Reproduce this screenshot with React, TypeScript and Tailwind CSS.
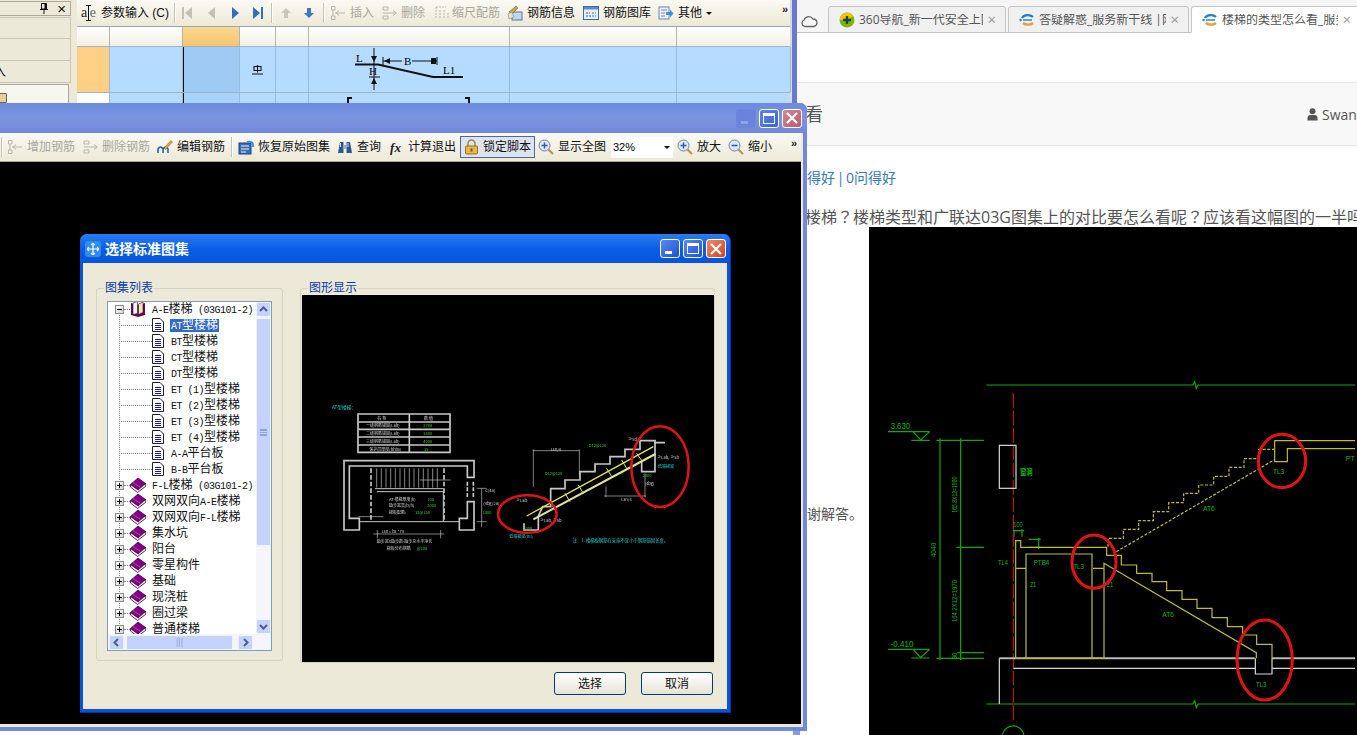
import React from 'react';

// ---------- small drawn icons ----------
const BookClosed = () => (
  <svg width="16" height="16" viewBox="0 0 16 16" className="shrink-0">
    <path d="M0.5 7.5 L8 1 L15.5 6.5 L8 13 Z" fill="#860086" stroke="#3c0040" strokeWidth="0.8" />
    <path d="M0.5 7.5 L0.5 10 L7.5 15.5 L15.5 9.5 L15.5 6.5 L8 13 Z" fill="#f6f0f6" stroke="#3c0040" strokeWidth="0.8" />
    <path d="M3 5.5 L10 10" stroke="#b040b0" strokeWidth="1" />
  </svg>
);

const BookOpen = () => (
  <svg width="16" height="16" viewBox="0 0 16 16" className="shrink-0">
    <path d="M1 2 L1 14 L8 16 L15 14 L15 2 L8 4 Z" fill="#5c1048" />
    <path d="M3 2 L7.5 0.5 L7.5 12.5 L3 13.5 Z" fill="#ffffff" stroke="#3c0040" strokeWidth="0.6" />
    <path d="M8.5 3 L13 1 L13 11.5 L8.5 13.5 Z" fill="#f6e8a8" stroke="#3c0040" strokeWidth="0.6" />
  </svg>
);

const DocIcon = () => (
  <svg width="12" height="14" viewBox="0 0 12 14" className="shrink-0">
    <path d="M0.5 0.5 H8 L11.5 4 V13.5 H0.5 Z" fill="#fff" stroke="#222" />
    <path d="M3 5.5 H9 M3 7.5 H9 M3 9.5 H9 M3 11.5 H9" stroke="#1a1a8c" />
  </svg>
);

const Nav = ({ d, color }: { d: string; color: string }) => (
  <svg width="12" height="14" viewBox="0 0 12 14" className="shrink-0">
    <path d={d} fill={color} />
  </svg>
);

const RowIcon = ({ tone }: { tone: 'insert' | 'remove' | 'scale' }) => (
  <svg width="16" height="16" viewBox="0 0 16 16" className="shrink-0" fill="none" stroke="#b9b7ac">
    {tone === 'insert' && <path d="M1.5 1.5 H5 V5 H1.5 Z M1.5 11 H5 V14.5 H1.5 Z M3 5 V11 M5 8 H15 M9 5.5 L6 8 L9 10.5" />}
    {tone === 'remove' && <path d="M1 2 H6 V5 H1 Z M1 11 H6 V14 H1 Z M1 8 H14 M11 5.5 L14.5 8 L11 10.5" />}
    {tone === 'scale' && <path strokeDasharray="2 1" d="M2 2 H12 M2 2 V14 M6 5 V14 M10 5 V14 M14 8 V14" />}
  </svg>
);

const EditIcon = () => (
  <svg width="16" height="16" viewBox="0 0 16 16" className="shrink-0">
    <path d="M1 14 V10 Q3.5 6 6 10 V14 M6 14 V10 Q8.5 6 11 10 V14" fill="none" stroke="#2d5fa8" strokeWidth="1.6" />
    <path d="M7 9 L14 1.5 L15.5 3 L8.5 10.5 Z" fill="#d9a93c" stroke="#6a5a28" strokeWidth="0.5" />
  </svg>
);

const RestoreIcon = () => (
  <svg width="16" height="16" viewBox="0 0 16 16" className="shrink-0">
    <rect x="1" y="4" width="12" height="11" fill="#3a6fb5" stroke="#1c3f78" />
    <path d="M3 7 H11 M3 10 H11 M3 13 H8" stroke="#e8eefa" />
    <path d="M9 3 A4 3 0 0 1 15 5 L15 8" stroke="#2f90e0" strokeWidth="1.8" fill="none" />
  </svg>
);

const BinocularIcon = () => (
  <svg width="16" height="16" viewBox="0 0 16 16" className="shrink-0">
    <path d="M1 14 L3 3 H6.5 V14 Z M9.5 14 V3 H13 L15 14 Z" fill="#2f5597" />
    <path d="M6.5 6 H9.5 V10 H6.5 Z" fill="#8fb0dc" />
    <path d="M3.5 4 V8 M11 4 V8" stroke="#cfe0f6" />
  </svg>
);

const FxIcon = () => (
  <span className="w-[14px] font-['Liberation_Serif',serif] text-[13px] font-bold italic leading-none text-[#222] shrink-0">fx</span>
);

const LockIcon = () => (
  <svg width="15" height="16" viewBox="0 0 15 16" className="shrink-0">
    <path d="M4 7 V4.5 A3.5 3.5 0 0 1 11 4.5 V7" fill="none" stroke="#9c8a5a" strokeWidth="1.6" />
    <rect x="1.5" y="7" width="12" height="8" rx="1" fill="#e9b93f" stroke="#9a7420" />
    <rect x="6.5" y="9.5" width="2" height="3" fill="#7a5a18" />
  </svg>
);

const Magnifier = ({ kind }: { kind: 'all' | 'plus' | 'minus' }) => (
  <svg width="16" height="16" viewBox="0 0 16 16" className="shrink-0">
    <path d="M10.5 10.5 L15 15" stroke="#b09a50" strokeWidth="2.2" />
    <circle cx="6.5" cy="6.5" r="5.5" fill="#dfe8f6" stroke="#6b84ac" />
    {kind !== 'minus' && <path d="M6.5 3.5 V9.5" stroke="#2f5fa8" strokeWidth="1.5" />}
    <path d="M3.5 6.5 H9.5" stroke="#2f5fa8" strokeWidth="1.5" />
  </svg>
);

const InfoIcon = () => (
  <svg width="16" height="16" viewBox="0 0 16 16" className="shrink-0">
    <rect x="5" y="7" width="10" height="8" fill="#c5d7ef" stroke="#4a74ae" />
    <path d="M2 7 L9 1 L11 3 L5 9 Z" fill="#c9a24b" stroke="#6a5a28" strokeWidth="0.5" />
    <path d="M1 9 L5 7 L7 12 L2 14 Z" fill="#e6e2cf" stroke="#777" strokeWidth="0.5" />
  </svg>
);

const LibraryIcon = () => (
  <svg width="16" height="14" viewBox="0 0 16 14" className="shrink-0">
    <rect x="0.5" y="0.5" width="15" height="13" fill="#e8eef8" stroke="#3f6aa8" />
    <rect x="1" y="1" width="14" height="2.5" fill="#5d8ac8" />
    <path d="M3 7 H7 M9 7 H13 M3 10 H13" stroke="#3f6aa8" strokeDasharray="2 1" />
  </svg>
);

const OtherIcon = () => (
  <svg width="16" height="16" viewBox="0 0 16 16" className="shrink-0">
    <rect x="1" y="2" width="10" height="12" fill="#eef2f8" stroke="#6d88ad" />
    <path d="M3 5 H9 M3 8 H7 M3 11 H7" stroke="#6d88ad" />
    <path d="M8 7 H12 V4.5 L15.5 8.5 L12 12.5 V10 H8 Z" fill="#3d8fe0" />
  </svg>
);

const AeIcon = () => (
  <span className="relative flex w-[15px] items-center justify-between font-['Liberation_Serif',serif] text-[14px] leading-none text-[#222] shrink-0">
    <span>a</span>
    <span className="text-[#666]">e</span>
    <svg width="5" height="16" viewBox="0 0 5 16" className="absolute left-[5px] top-0 -mt-[1px]">
      <path d="M0 0.5 H5 M2.5 0.5 V15.5 M0 15.5 H5" stroke="#111" />
    </svg>
  </span>
);

const PinIcon = () => (
  <svg width="8" height="11" viewBox="0 0 8 11" className="shrink-0">
    <path d="M1.5 0.5 H6.5 V6 H1.5 Z M0 6.5 H8 M4 6.5 V11" fill="none" stroke="#111" />
    <path d="M4.5 1 H6.5 V6 H4.5 Z" fill="#111" />
  </svg>
);

const RebarMark = () => (
  <svg width="11" height="10" viewBox="0 0 11 10" className="shrink-0">
    <path d="M2 1.5 H9 V5.5 H2 Z M5.5 0 V7.5 M0 9 H11" fill="none" stroke="#111" strokeWidth="1.1" />
  </svg>
);

const Chevrons = () => (
  <span className="font-['Liberation_Sans',sans-serif] text-[11px] font-bold leading-none text-[#222]">»</span>
);

const ToolLabel = ({ children, off }: { children: React.ReactNode; off?: boolean }) => (
  <span className={`whitespace-nowrap ${off ? 'text-[#a9a79c]' : 'text-[#111]'}`}>{children}</span>
);

const Sep = ({ className }: { className: string }) => <div className={`h-[20px] w-[2px] border-l border-[#c5c2b8] bg-white shrink-0 ${className}`} />;

// ---------- back window with the rebar grid ----------
const BackWindow = () => {
  const cols = ['w-[33px]', 'w-[73px]', 'w-[57px]', 'w-[36px]', 'w-[33px]', 'w-[201px]', 'w-[167px]', 'w-[114px]'];
  return (
    <div className="absolute left-0 top-0 flex h-[120px] w-[797px] bg-[#ece9d8]">
      <div className="flex w-[71px] flex-col pt-px text-[12px] text-[#111] shrink-0">
        <div className="flex h-[15px] items-center justify-end gap-[9px] border border-l-0 border-[#aca899] pr-[4px] leading-none">
          <PinIcon />
          <span className="text-[15px] font-light">×</span>
        </div>
        <div className="mt-px h-[22px] border-y border-r border-[#c9c6b6]" />
        <div className="h-[22px] border-b border-r border-[#c9c6b6]" />
        <div className="flex h-[22px] items-center overflow-hidden border-b border-r border-[#c9c6b6]"><span className="-ml-[6px]">入</span></div>
        <div className="relative mr-[2px] mt-px h-[30px] border-r border-t border-[#aca899] bg-[#f7f6ef]">
          <span className="absolute -left-[1px] top-[8px] h-[10px] w-[8px] rounded-[1px] border border-[#6a6a5a] bg-[#e8cf9a]" />
        </div>
      </div>
      <div className="ml-[6px] flex w-[713px] flex-col shrink-0">
        <div className="flex h-[26px] items-center bg-gradient-to-b from-[#fbfaf3] to-[#ece9d8] text-[12px] leading-none [&>*]:shrink-0">
          <div className="ml-[4px]"><AeIcon /></div>
          <div className="ml-[5px]"><ToolLabel>参数输入 (C)</ToolLabel></div>
          <Sep className="ml-[5px]" />
          <div className="ml-[6px]"><Nav d="M0 1 H2 V13 H0 Z M10 1 V13 L3 7 Z" color="#c3c1b6" /></div>
          <div className="ml-[13px]"><Nav d="M8 1 V13 L1 7 Z" color="#c3c1b6" /></div>
          <div className="ml-[11px]"><Nav d="M2 1 L9 7 L2 13 Z" color="#2e6fc0" /></div>
          <div className="ml-[11px]"><Nav d="M0 1 L7 7 L0 13 Z M8 1 H10 V13 H8 Z" color="#2e6fc0" /></div>
          <Sep className="ml-[6px]" />
          <div className="ml-[7px]"><Nav d="M6 2 L11 7 H8 V12 H4 V7 H1 Z" color="#c9c7bc" /></div>
          <div className="ml-[11px]"><Nav d="M6 12 L11 7 H8 V2 H4 V7 H1 Z" color="#3a78cc" /></div>
          <Sep className="ml-[8px]" />
          <div className="ml-[5px]"><RowIcon tone="insert" /></div>
          <div className="ml-[4px]"><ToolLabel off>插入</ToolLabel></div>
          <div className="ml-[8px]"><RowIcon tone="remove" /></div>
          <div className="ml-[3px]"><ToolLabel off>删除</ToolLabel></div>
          <div className="ml-[9px]"><RowIcon tone="scale" /></div>
          <div className="ml-[2px]"><ToolLabel off>缩尺配筋</ToolLabel></div>
          <div className="ml-[7px]"><InfoIcon /></div>
          <div className="ml-[4px]"><ToolLabel>钢筋信息</ToolLabel></div>
          <div className="ml-[8px]"><LibraryIcon /></div>
          <div className="ml-[4px]"><ToolLabel>钢筋图库</ToolLabel></div>
          <div className="ml-[7px]"><OtherIcon /></div>
          <div className="ml-[4px]"><ToolLabel>其他</ToolLabel></div>
          <div className="ml-[4px] h-0 w-0 border-x-[3px] border-t-[3px] border-x-transparent border-t-[#111]" />
          <div className="ml-[70px] -mt-[8px]"><Chevrons /></div>
        </div>
        <div className="flex h-[20px] border-t border-[#9aa6b0] bg-gradient-to-b from-white to-[#f1efe4]">
          {cols.map((w, i) => (
            <div key={w + i} className={`${w} h-full shrink-0 border-r border-[#b8b6a8] ${i === 2 ? 'bg-gradient-to-b from-[#fbd88f] to-[#f6c570]' : ''}`} />
          ))}
        </div>
        <div className="flex h-[46px] border-t border-[#9fb3c6]">
          {cols.map((w, i) => (
            <div key={w + i} className={`${w} relative flex h-full shrink-0 items-center justify-center border-r border-[#98bcdc] ${i === 0 ? 'bg-[#fdd086]' : i === 2 ? 'border-l border-l-[#111] bg-[#9fcaf4]' : 'bg-[#b5dcff]'}`}>
              {i === 3 && <RebarMark />}
            </div>
          ))}
        </div>
        <div className="flex h-[28px] border-t border-[#9fb3c6]">
          {cols.map((w, i) => (
            <div key={w + i} className={`${w} h-full shrink-0 border-r border-[#98bcdc] ${i === 0 ? 'bg-white' : i === 2 ? 'border-l border-l-[#111] bg-[#a9d2f8]' : 'bg-[#b5dcff]'}`} />
          ))}
        </div>
      </div>
      <div className="h-full w-[7px] border-l-[2px] border-[#d8d8e0] bg-[#6a78d0]" />
    </div>
  );
};

// rebar shape drawn over the grid row
const RebarShape = () => (
  <svg className="absolute left-[340px] top-[44px]" width="130" height="60" viewBox="0 0 130 60">
    <path d="M15 20.5 H38 L93 33 H123" fill="none" stroke="#111" strokeWidth="1.8" />
    <path d="M34 4 V46 M29 33 H40 M43 13 V21 M43 17 H62 M72 17 H97 M97 13 V21" stroke="#111" />
    <path d="M31 12 H37 L34 18 Z M31 40 H37 L34 34 Z M44 17 L50 14 V20 Z M91 14 H96 V20 H91 Z" fill="#111" />
    <text x="16" y="18" fontSize="11" fontFamily="Liberation Serif, serif">L</text>
    <text x="29" y="31" fontSize="11" fontFamily="Liberation Serif, serif">H</text>
    <text x="64" y="21" fontSize="11" fontFamily="Liberation Serif, serif">B</text>
    <text x="103" y="30" fontSize="11" fontFamily="Liberation Serif, serif">L1</text>
    <path d="M8 59 V54 H12 M125 54 H129 V59" fill="none" stroke="#111" strokeWidth="2" />
  </svg>
);

// ---------- browser ----------
const IeIcon = () => (
  <svg width="16" height="16" viewBox="0 0 16 16" className="shrink-0">
    <path d="M3 6 A6.5 5 0 0 1 14 5" fill="none" stroke="#1f7fd0" strokeWidth="2.4" />
    <path d="M4 11 A6.5 4.5 0 0 0 14 11" fill="none" stroke="#e8a030" strokeWidth="2.4" />
    <path d="M4 8 H13" stroke="#1f7fd0" strokeWidth="1.4" />
    <circle cx="1.6" cy="8" r="1.2" fill="#1f7fd0" />
  </svg>
);

const Tab = ({ icon, label, active, width }: { icon: React.ReactNode; label: string; active?: boolean; width: string }) => (
  <div className={`flex h-[27px] shrink-0 items-center gap-[4px] rounded-t-[3px] border border-[#c4c4c4] pl-[10px] pr-[9px] text-[12px] leading-none text-[#555] ${width} ${active ? 'border-b-white bg-white text-[#333]' : 'bg-[#f0f0f0]'}`}>
    {icon}
    <span className="min-w-0 flex-1 overflow-hidden whitespace-nowrap">{label}</span>
    <span className="text-[15px] text-[#999]">×</span>
  </div>
);

const Q = () => <span className="font-['Noto_Sans_CJK_TC',sans-serif]">？</span>;

const Browser = () => (
  <div className="absolute left-[797px] top-0 flex h-[735px] w-[560px] flex-col bg-white font-['Open_Sans','Noto_Sans_CJK_SC',sans-serif]">
    <div className="flex h-[33px] items-end border-b border-[#c4c4c4] bg-[#f5f5f5]">
      <svg width="18" height="14" viewBox="0 0 18 14" className="mb-[4px] ml-[3px] shrink-0">
        <path d="M4.5 12.5 A3.5 3.5 0 0 1 4 6 A5 5 0 0 1 13 5 A3.8 3.8 0 0 1 14 12.5 Z" fill="none" stroke="#666" strokeWidth="1.3" />
      </svg>
      <div className="-mb-px ml-[10px] flex gap-[2px]">
        <Tab width="w-[178px]" label="360导航_新一代安全上网" icon={
          <svg width="16" height="16" viewBox="0 0 16 16" className="shrink-0">
            <circle cx="8" cy="8" r="7.5" fill="#7ab51d" />
            <path d="M1 8 A7 7 0 0 1 14 4 L8 8 Z" fill="#f4c20d" />
            <path d="M8 4 V12 M4 8 H12" stroke="#1a4a10" strokeWidth="2.4" />
          </svg>
        } />
        <Tab width="w-[181px]" label="答疑解惑_服务新干线 |网" icon={<IeIcon />} />
        <Tab width="w-[170px]" active label="楼梯的类型怎么看_服务新干线" icon={<IeIcon />} />
      </div>
    </div>
    <div className="h-[49px] shrink-0" />
    <div className="flex h-[64px] shrink-0 items-center justify-between border-y border-[#e7e7e7] bg-[#f8f8f8] pl-[8px] text-[#555]">
      <span className="text-[18px]">看</span>
      <span className="flex items-center gap-[4px] text-[14px]">
        <svg width="11" height="13" viewBox="0 0 11 13" className="shrink-0">
          <circle cx="5.5" cy="3.2" r="3" fill="#555" />
          <path d="M0.5 12.5 V10 Q0.5 7 3.5 7 H7.5 Q10.5 7 10.5 10 V12.5 Z" fill="#555" />
        </svg>
        <span className="w-[35px] overflow-hidden">Swan</span>
      </span>
    </div>
    <div className="mt-[21px] flex h-[20px] shrink-0 items-center whitespace-pre pl-[10px] text-[14px] text-[#337ab7] [word-spacing:-2px]">得好 | 0问得好</div>
    <div className="mt-[19px] h-[21px] shrink-0 whitespace-nowrap pl-[8px] text-[16px] leading-[21px] text-[#555]">
      楼梯<Q />楼梯类型和广联达03G图集上的对比要怎么看呢<Q />应该看这幅图的一半吗<Q />
    </div>
    <div className="relative flex min-h-0 flex-1">
      <div className="w-[72px] shrink-0 pl-[10px] pt-[276px] text-[14px] text-[#555]">谢解答。</div>
      <div className="min-w-0 flex-1 overflow-hidden bg-black pt-[143px]">
        <PlanDrawing />
      </div>
    </div>
  </div>
);

// condensed CAD label: stretched into the width it has in the drawing
const Lbl = ({ x, y, w, size = 24, rotate, bold, children }: { x: number; y: number; w: number; size?: number; rotate?: boolean; bold?: boolean; children: string }) => (
  <text
    x={rotate ? 0 : x}
    y={rotate ? 0 : y}
    transform={rotate ? `translate(${x} ${y}) rotate(-90)` : undefined}
    textLength={w}
    lengthAdjust="spacingAndGlyphs"
    fill="#10b810"
    fontSize={size}
    fontWeight={bold ? 'bold' : 'normal'}
    fontFamily="Liberation Sans, Noto Sans CJK SC, sans-serif"
  >
    {children}
  </text>
);

const PlanDrawing = () => {
  const green = '#10a810';
  const yellow = '#bcbc3a';
  const white = '#d8d8d8';
  return (
    <svg width="487" height="365" viewBox="0 0 1461 1095" className="-ml-[1px] block shrink-0">
      <g fill="none" strokeWidth="3.6">
        <g stroke={green}>
          <path d="M355 45 H975 L980 35 L985 56 L990 45 H1461" />
          <path d="M355 1002 H975 L980 992 L985 1013 L990 1002 H1461" />
          <path d="M60 185 H185 M135 185 L158 210 L185 185 M130 211 H185" />
          <path d="M60 838 H185 M135 838 L158 862 L185 838 M130 864 H185" />
          <path d="M205 211 H348 M216 205 V870 M278 205 V870 M265 532 H348 M205 865 H348 M268 848 H348" />
          <path d="M438 478 V500 M462 478 V500 M434 482 H468 M482 508 H518 M482 532 H518 M512 504 V538" />
        </g>
        <path d="M436 70 V1060" stroke="#c41818" strokeDasharray="44 8" />
        <path d="M403 1095 A33 33 0 0 1 468 1095" stroke={green} />
        <rect x="394" y="226" width="50" height="129" stroke={white} />
        <g stroke={white}>
          <path d="M394 865 H1160 M1212 865 H1461" strokeWidth="6" stroke="#b8b8b8" />
          <path d="M436 895 H1162 M1212 895 H1461 M394 865 V1002 M1162 865 V912 H1212 V865" />
        </g>
        <g stroke={yellow}>
          <path d="M443 865 V512 H458 V532 H716 V556 H760 V585 H806 V610 H852 V635 H896 V662 H942 V688 H987 V715 H1032 V743 H1078 V770 H1124 V795 H1166 V823 H1212 V865" />
          <path d="M474 865 V552 H672 V865 M708 865 V580 L1165 848 V865 M443 595 H474 M675 595 H708 M443 865 H708" />
          <path d="M1220 238 V212 H1461 M1220 212 V275 H1258 V236 H1461" />
          <path strokeDasharray="9 5" d="M720 530 V505 H766 V478 H812 V452 H856 V425 H902 V398 H947 V370 H992 V345 H1037 V319 H1083 V292 H1128 V266 H1172 V238 H1218" />
          <path strokeDasharray="9 5" d="M745 545 L1218 270" />
        </g>
      </g>
      <Lbl x={68} y={178} w={58} size={28}>3.630</Lbl>
      <Lbl x={68} y={830} w={68} size={28}>-0.410</Lbl>
      <Lbl x={266} y={428} w={108} rotate>165.8X12=1980</Lbl>
      <Lbl x={266} y={756} w={126} rotate>164.2X12=1970</Lbl>
      <Lbl x={204} y={562} w={44} rotate>4040</Lbl>
      <Lbl x={266} y={868} w={20} rotate>90</Lbl>
      <Lbl x={456} y={316} w={38} bold>窗洞</Lbl>
      <Lbl x={436} y={472} w={28}>100</Lbl>
      <Lbl x={390} y={584} w={30}>TL4</Lbl>
      <Lbl x={497} y={584} w={47}>PTB4</Lbl>
      <Lbl x={616} y={596} w={32}>TL3</Lbl>
      <Lbl x={486} y={650} w={18}>Z1</Lbl>
      <Lbl x={717} y={650} w={18}>Z1</Lbl>
      <Lbl x={1005} y={424} w={35}>AT6</Lbl>
      <Lbl x={883} y={742} w={35}>AT6</Lbl>
      <Lbl x={1215} y={312} w={33}>TL3</Lbl>
      <Lbl x={1163} y={952} w={33}>TL3</Lbl>
      <Lbl x={1433} y={272} w={28}>PT</Lbl>
      <g fill="none" stroke="#e01414" strokeWidth="9">
        <ellipse cx="1242" cy="273" rx="71" ry="80" />
        <ellipse cx="678" cy="575" rx="66" ry="80" />
        <ellipse cx="1190" cy="870" rx="83" ry="120" />
      </g>
    </svg>
  );
};

// ---------- preview drawing inside the dialog ----------
const AtStairPreview = () => {
  const gray = '#c8c8c8';
  const tiny = { fontSize: 14, fontFamily: 'Noto Sans CJK SC, sans-serif' } as const;
  return (
    <svg width="380" height="190" viewBox="0 0 1140 570" className="ml-[18px] block shrink-0 blur-[0.3px]">
      <text x="36" y="57" fill="#1ad0d0" {...tiny}>AT型楼梯：</text>
      <g fill="none" stroke={gray} strokeWidth="5">
        <path d="M114 72 H390 V187 H114 Z M114 96 H390 M114 118 H390 M114 141 H390 M114 165 H390 M268 72 V187" />
        <path d="M72 420 V212 H462 V262 H442 V228 H88 V385 H118 V420 Z" />
        <path d="M462 335 V420 H418 V385 H442 V335 Z" />
        <path d="M118 395 H418" strokeWidth="3" />
        <path d="M153 235 V392 M372 235 V392" strokeDasharray="14 6" strokeWidth="5" />
        <path d="M442 275 V325 M460 275 V325" strokeDasharray="12 5" />
        <path d="M170 235 V293 M184 235 V293 M198 235 V293 M212 235 V293 M226 235 V293 M240 235 V293 M254 235 V293 M268 235 V293 M282 235 V293 M296 235 V293 M310 235 V293 M324 235 V293 M338 235 V293 M352 235 V293" strokeWidth="2" />
        <path d="M165 296 H370 M170 305 H370 V395" strokeWidth="3" />
      </g>
      <g fill="none" stroke="#bfbfbf" strokeWidth="2">
        <path d="M300 270 H392 M115 380 H190 M485 295 V412 M470 295 H500 M470 395 H500 M160 432 H372 M172 420 V445 M362 420 V445" />
        <path d="M638 182 H778 M640 178 V290 M778 178 V260 M852 318 H978 M858 290 V322 M975 250 V322" />
      </g>
      <g fill="none" stroke={gray} strokeWidth="5">
        <path d="M612 400 L612 420 H655 V378 L668 350 H692 V296 H735 V270 H780 V245 H825 V222 H870 V200 H915 V178 H960 V152 H1005 V158 H1035" />
        <path d="M965 215 V245 H1005 V215 M1005 155 V215" />
      </g>
      <g fill="none" stroke="#e6e65a">
        <path d="M620 378 L1000 170" strokeWidth="4" />
        <path d="M640 388 L1006 192" strokeWidth="6" stroke="#e2e29e" />
        <path d="M690 335 L705 360 M735 310 L750 335 M775 285 L790 310 M860 235 L875 260 M905 210 L920 235 M950 190 L965 212" strokeWidth="3" />
      </g>
      <g {...tiny} fontSize="12">
        <text x="172" y="91" fill="#d8d8d8">名 称</text>
        <text x="312" y="91" fill="#d8d8d8">数 值</text>
        <text x="138" y="112" fill="#d0d0d0">一级钢筋锚固(Lab)</text>
        <text x="310" y="112" fill="#30d030">2700</text>
        <text x="138" y="135" fill="#d0d0d0">二级钢筋锚固(Lab)</text>
        <text x="310" y="135" fill="#30d030">3400</text>
        <text x="138" y="158" fill="#d0d0d0">三级钢筋锚固(Lab)</text>
        <text x="310" y="158" fill="#30d030">4000</text>
        <text x="148" y="182" fill="#d0d0d0">保护层厚度(bhbs)</text>
        <text x="312" y="182" fill="#30d030">15</text>
        <text x="207" y="332" fill="#d8d8d8">AT 楼梯厚度(h)</text>
        <text x="322" y="332" fill="#30d030">100</text>
        <text x="207" y="352" fill="#d8d8d8">踏步宽高(b/h)</text>
        <text x="322" y="352" fill="#30d030">2000</text>
        <text x="207" y="372" fill="#d8d8d8">梯板配筋:</text>
        <text x="285" y="372" fill="#30d030">12@150</text>
        <text x="185" y="430" fill="#d0d0d0">Lsn = bs * m</text>
        <text x="170" y="458" fill="#d0d0d0">踏步宽X踏步数-踏步总水平净长</text>
        <text x="200" y="480" fill="#d0d0d0">梯板分布钢筋</text>
        <text x="290" y="480" fill="#30d030">@200</text>
        <text x="496" y="306" fill="#d0d0d0">C(4a)</text>
        <text x="490" y="346" fill="#d0d0d0">(4bg/2a)</text>
        <text x="488" y="372" fill="#30d030">1800</text>
        <text x="692" y="182" fill="#d0d0d0">Lsn/4</text>
        <text x="904" y="332" fill="#d0d0d0">Lsn/4</text>
        <text x="806" y="170" fill="#30d030">D12@120</text>
        <text x="674" y="254" fill="#30d030">D12@120</text>
        <text x="925" y="152" fill="#d0d0d0">≥5d</text>
        <text x="1012" y="206" fill="#d0d0d0">≥Lab, ≥5b</text>
        <text x="974" y="284" fill="#d0d0d0">(4bg)</text>
        <text x="588" y="335" fill="#d0d0d0">≥Lab</text>
        <text x="660" y="397" fill="#d0d0d0">≥Lab, ≥5b</text>
        <text x="968" y="260" fill="#30d030">2000</text>
        <text x="610" y="420" fill="#30d030">2000</text>
        <text x="1014" y="233" fill="#1ad0d0">低端梯梁</text>
        <text x="568" y="445" fill="#1ad0d0">低端梯梁(ml)</text>
        <text x="758" y="455" fontSize="13" fill="#1ad0d0">注：1. 楼梯板钢筋在支座不宜小于钢筋锚固长度。</text>
      </g>
      <g fill="none" stroke="#e01414" strokeWidth="7.5">
        <ellipse cx="622" cy="372" rx="88" ry="56" />
        <ellipse cx="1020" cy="230" rx="86" ry="121" />
      </g>
    </svg>
  );
};

// ---------- tree ----------
const Mixed = ({ text }: { text: string }) => (
  <>
    {text.split(/([\x20-\x7e]+)/).map((part, i) =>
      /^[\x20-\x7e]+$/.test(part) ? (
        <span key={i} className="font-['Liberation_Mono',monospace] text-[10px] tracking-[-0.5px]">{part}</span>
      ) : (
        <span key={i}>{part}</span>
      ),
    )}
  </>
);

const PlusBox = ({ open }: { open?: boolean }) => (
  <span className="relative z-10 flex h-[9px] w-[9px] items-center justify-center border border-[#8a8a8a] bg-gradient-to-br from-white to-[#d8d4c8] shrink-0">
    <span className="absolute h-px w-[5px] bg-black" />
    {!open && <span className="absolute h-[5px] w-px bg-black" />}
  </span>
);

const docs = ['AT型楼梯', 'BT型楼梯', 'CT型楼梯', 'DT型楼梯', 'ET (1)型楼梯', 'ET (2)型楼梯', 'ET (3)型楼梯', 'ET (4)型楼梯', 'A-A平台板', 'B-B平台板'];
const books = ['F-L楼梯 (03G101-2)', '双网双向A-E楼梯', '双网双向F-L楼梯', '集水坑', '阳台', '零星构件', '基础', '现浇桩', '圈过梁', '普通楼梯'];

const ScrollBtn = ({ d, className }: { d: string; className: string }) => (
  <div className={`flex h-[15px] w-[15px] items-center justify-center rounded-[2px] border border-[#eef3fe] bg-[#c3d3fd] shrink-0 ${className}`}>
    <svg width="9" height="9" viewBox="0 0 9 9"><path d={d} fill="none" stroke="#4d6185" strokeWidth="2" /></svg>
  </div>
);

const Tree = () => (
  <div className="flex h-[350px] w-[165px] flex-col border border-[#7f9db9] bg-white text-[12px] leading-none text-[#111]">
    <div className="flex min-h-0 flex-1">
      <div className="relative min-w-0 flex-1 overflow-hidden">
        <div className="absolute bottom-0 left-[11px] top-[8px] border-l border-dotted border-[#888]" />
        <div className="-mt-[1px] flex h-4 items-center pl-[7px]">
          <PlusBox open />
          <span className="w-[6px] border-t border-dotted border-[#888] shrink-0" />
          <BookOpen />
          <span className="ml-[6px] whitespace-nowrap"><Mixed text="A-E楼梯 (03G101-2)" /></span>
        </div>
        {docs.map((d, i) => (
          <div key={d} className="flex h-4 items-center pl-[11px]">
            <span className="w-[33px] border-t border-dotted border-[#888] shrink-0" />
            <DocIcon />
            <span className={`ml-[6px] whitespace-nowrap px-px ${i === 0 ? 'bg-[#316ac5] text-white' : ''}`}><Mixed text={d} /></span>
          </div>
        ))}
        {books.map((b) => (
          <div key={b} className="flex h-4 items-center pl-[7px]">
            <PlusBox />
            <span className="w-[6px] border-t border-dotted border-[#888] shrink-0" />
            <BookClosed />
            <span className="ml-[6px] whitespace-nowrap"><Mixed text={b} /></span>
          </div>
        ))}
      </div>
      <div className="flex w-[15px] flex-col bg-[#f4f6fc] shrink-0">
        <ScrollBtn d="M1 6 L4.5 2.5 L8 6" className="" />
        <div className="relative mt-px flex h-[228px] items-center justify-center rounded-[2px] border border-[#eef3fe] bg-[#c3d3fd]">
          <div className="h-[7px] w-[7px] border-y border-[#8ea4d8] bg-[linear-gradient(#8ea4d8_1px,transparent_1px)] bg-[length:2px_2px]" />
        </div>
        <div className="flex-1" />
        <ScrollBtn d="M1 3 L4.5 6.5 L8 3" className="" />
      </div>
    </div>
    <div className="flex h-[16px] items-center bg-[#f4f6fc] shrink-0">
      <ScrollBtn d="M6 1 L2.5 4.5 L6 8" className="ml-[1px]" />
      <div className="ml-[2px] flex h-[15px] w-[107px] items-center justify-center rounded-[2px] border border-[#eef3fe] bg-[#c3d3fd] text-[9px] leading-none text-[#8ea4d8]">|||</div>
      <ScrollBtn d="M3 1 L6.5 4.5 L3 8" className="ml-[5px]" />
    </div>
  </div>
);

// ---------- dialog ----------
const Group = ({ label, className, children }: { label: string; className: string; children: React.ReactNode }) => (
  <div className={`relative shrink-0 rounded-[3px] border border-[#d5d2c0] ${className}`}>
    <span className="absolute -top-[8px] left-[7px] bg-[#ece9d8] px-px text-[12px] leading-[14px] text-[#0a3aa8]">{label}</span>
    {children}
  </div>
);

const XpButton = ({ label }: { label: string }) => (
  <button type="button" className="flex h-[23px] w-[72px] items-center justify-center rounded-[3px] border border-[#003c74] bg-gradient-to-b from-white to-[#e6e3d6] text-[12px] leading-none text-[#111]">
    {label}
  </button>
);

const WinButtons = ({ dim }: { dim?: boolean }) => (
  <div className="flex gap-[3px] shrink-0">
    <span className={`relative h-[19px] w-[20px] rounded-[3px] border ${dim ? 'border-[#6f86d8] bg-[#6a84dc]' : 'border-white bg-gradient-to-br from-[#5a8af0] to-[#1f4fd0]'}`}>
      <span className={`absolute bottom-[3px] left-[4px] h-[3px] w-[7px] ${dim ? 'bg-[#8ea4e4]' : 'bg-white'}`} />
    </span>
    <span className={`relative h-[19px] w-[20px] rounded-[3px] border border-white bg-gradient-to-br ${dim ? 'from-[#5f86e8] to-[#3a62d8]' : 'from-[#5a8af0] to-[#1f4fd0]'}`}>
      <span className="absolute left-[3px] top-[3px] h-[11px] w-[12px] border border-t-[3px] border-white" />
    </span>
    <span className={`relative flex h-[19px] w-[20px] items-center justify-center rounded-[3px] border border-white bg-gradient-to-br ${dim ? 'from-[#cf8a90] to-[#b85a70]' : 'from-[#ee8a60] to-[#d2401c]'}`}>
      <svg width="12" height="12" viewBox="0 0 12 12"><path d="M1 1 L11 11 M11 1 L1 11" stroke="#fff" strokeWidth="2.2" /></svg>
    </span>
  </div>
);

const Dialog = () => (
  <div className="absolute left-[80px] top-[234px] flex h-[479px] w-[651px] flex-col rounded-t-[7px] border-r border-b border-[#0831a8] bg-[#0855dd]">
    <div className="flex h-[29px] items-center rounded-t-[7px] bg-gradient-to-b from-[#2a7cf2] via-[#0a5ee6] to-[#0753dc] pl-[5px] pr-[4px] shrink-0">
      <span className="flex h-[16px] w-[16px] items-center justify-center rounded-[3px] bg-[#2f8cf0] shrink-0">
        <svg width="12" height="12" viewBox="0 0 12 12"><path d="M6 0 V12 M0 6 H12 M4 2 L6 0 L8 2 M4 10 L6 12 L8 10 M2 4 L0 6 L2 8 M10 4 L12 6 L10 8" stroke="#fff" fill="none" strokeWidth="1.2" /></svg>
      </span>
      <span className="ml-[4px] flex-1 text-[14px] font-bold leading-none text-white">选择标准图集</span>
      <WinButtons />
    </div>
    <div className="mx-[3px] mb-[3px] flex min-h-0 flex-1 flex-col bg-[#ece9d8] pl-[13px] pt-[25px]">
      <div className="flex gap-[17px]">
        <Group label="图集列表" className="h-[373px] w-[187px] pl-[10px] pt-[12px]"><Tree /></Group>
        <Group label="图形显示" className="h-[375px] w-[415px] pl-px pt-[6px]">
          <div className="h-[367px] w-[412px] bg-black pt-[95px]"><AtStairPreview /></div>
        </Group>
      </div>
      <div className="ml-[458px] mt-[9px] flex gap-[15px]">
        <XpButton label="选择" />
        <XpButton label="取消" />
      </div>
    </div>
  </div>
);

// ---------- front drawing window ----------
const FrontWindow = () => (
  <div className="absolute left-0 top-[103px] flex h-[628px] w-[807px] flex-col rounded-tr-[7px] bg-[#7089dc]">
    <div className="flex h-[30px] items-center justify-end bg-gradient-to-b from-[#6e8ade] via-[#7a95e0] to-[#7088dc] pr-[5px] shrink-0 rounded-tr-[7px]">
      <WinButtons dim />
    </div>
    <div className="mb-[4px] mr-[4px] flex min-h-0 flex-1 flex-col bg-[#ece9d8] pb-[3px] pr-[2px]">
      <div className="flex h-[29px] items-center border-b border-[#aca899] bg-gradient-to-b from-[#fbfaf3] to-[#ece9d8] text-[12px] leading-none shrink-0 [&>*]:shrink-0">
        <Sep className="ml-[1px]" />
        <div className="ml-[4px]"><RowIcon tone="insert" /></div>
        <div className="ml-[4px]"><ToolLabel off>增加钢筋</ToolLabel></div>
        <div className="ml-[8px]"><RowIcon tone="remove" /></div>
        <div className="ml-[3px]"><ToolLabel off>删除钢筋</ToolLabel></div>
        <div className="ml-[7px]"><EditIcon /></div>
        <div className="ml-[4px]"><ToolLabel>编辑钢筋</ToolLabel></div>
        <Sep className="ml-[6px]" />
        <div className="ml-[5px]"><RestoreIcon /></div>
        <div className="ml-[4px]"><ToolLabel>恢复原始图集</ToolLabel></div>
        <div className="ml-[7px]"><BinocularIcon /></div>
        <div className="ml-[4px]"><ToolLabel>查询</ToolLabel></div>
        <div className="ml-[9px]"><FxIcon /></div>
        <div className="ml-[7px]"><ToolLabel>计算退出</ToolLabel></div>
        <div className="ml-[4px] flex h-[22px] w-[75px] items-center border border-[#4b6a9c] bg-[#dfe3ee] pl-[3px]">
          <LockIcon />
          <span className="ml-[4px] text-[#111]">锁定脚本</span>
        </div>
        <div className="ml-[3px]"><Magnifier kind="all" /></div>
        <div className="ml-[4px]"><ToolLabel>显示全图</ToolLabel></div>
        <div className="ml-[5px] flex h-[21px] w-[62px] items-center justify-between bg-white pl-[2px] pr-[3px] text-[11px]">
          <span className="font-['Liberation_Sans',sans-serif]">32%</span>
          <span className="h-0 w-0 border-x-[3px] border-t-[3px] border-x-transparent border-t-[#111]" />
        </div>
        <div className="ml-[4px]"><Magnifier kind="plus" /></div>
        <div className="ml-[4px]"><ToolLabel>放大</ToolLabel></div>
        <div className="ml-[7px]"><Magnifier kind="minus" /></div>
        <div className="ml-[4px]"><ToolLabel>缩小</ToolLabel></div>
        <div className="ml-[19px] -mt-[8px]"><Chevrons /></div>
      </div>
      <div className="min-h-0 flex-1 bg-black" />
    </div>
  </div>
);

export default function App() {
  return (
    <div className="relative h-[735px] w-[1357px] overflow-hidden bg-white font-['Liberation_Sans','Noto_Sans_CJK_SC',sans-serif]">
      <BackWindow />
      <RebarShape />
      <Browser />
      <FrontWindow />
      <Dialog />
      <div className="absolute left-[793px] top-[731px] h-[4px] w-[7px] bg-[#8a9ad8]" />
    </div>
  );
}
